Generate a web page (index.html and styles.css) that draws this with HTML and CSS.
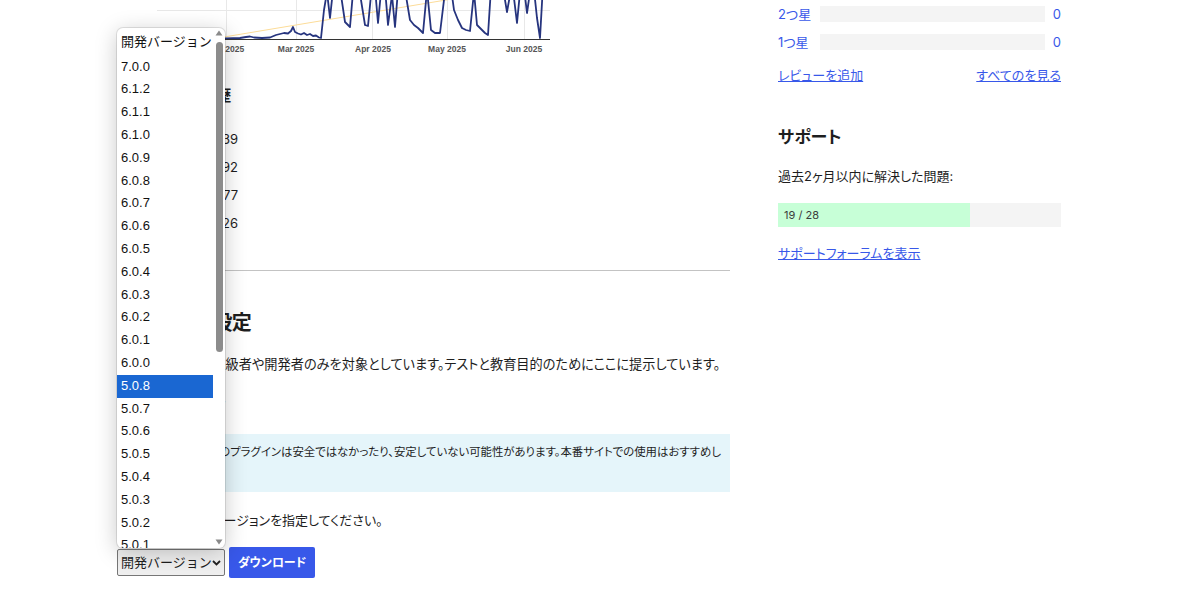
FILE: index.html
```html
<!DOCTYPE html>
<html lang="ja">

<head>
  <meta charset="UTF-8">
  <meta name="viewport" content="width=device-width, initial-scale=1.0">
  <title>プラグイン - 高度な表示</title>
  <link rel="stylesheet" href="styles.css">
</head>

<body>
  <div class="page">
    <main class="main">
      <svg class="chart" width="613" height="56" viewBox="117 0 613 56">
        <line class="grid" x1="157" y1="10.5" x2="550" y2="10.5" />
        <line class="grid" x1="226.5" y1="0" x2="226.5" y2="39" />
        <line class="grid" x1="296.5" y1="0" x2="296.5" y2="39" />
        <line class="grid" x1="372.5" y1="0" x2="372.5" y2="39" />
        <line class="grid" x1="447.5" y1="0" x2="447.5" y2="39" />
        <line class="grid" x1="524.5" y1="0" x2="524.5" y2="39" />
        <line class="trend" x1="200" y1="41" x2="452" y2="-1" />
        <polyline class="series" points="157,38.5 200,38.5 226,38.5 240,38 246,37 250,36.5 254,37.5 262,38 270,37.5 276,35 280,34 284,33 288,33.5 291,31 293,27 295,32 298,33.5 301,34.5 304,33 307,35 310,34 313,36 316,35.5 319,37.5 321,38 324,10 327,-8 330,18 333,-10 337,-12 341,-5 345,22 350,27 353,-8 357,-12 361,0 365,25 368,26 371,-5 375,-12 378,23 381,-8 385,-12 388,25 392,-5 395,27 398,-10 402,-12 406,-4 410,20 414,25 418,28 423,33 427,-10 431,30 435,33 440,33 444,0 447,-10 451,-12 454,10 458,20 462,28 466,30 470,31 474,-8 477,25 481,29 485,33 488,35 491,-12 495,-12 499,-8 503,-12 507,12 510,-5 513,-10 517,23 520,-8 524,-12 527,13 530,-8 534,-10 537,18 540,38 543,-15" />
        <line class="axis" x1="157" y1="39.5" x2="550" y2="39.5" />
        <text x="226" y="52">Feb 2025</text>
        <text x="296" y="52">Mar 2025</text>
        <text x="373" y="52">Apr 2025</text>
        <text x="447" y="52">May 2025</text>
        <text x="524" y="52">Jun 2025</text>
      </svg>

      <section class="history">
        <h3>ダウンロード履歴</h3>
        <table class="history-table">
          <tr><th>今日</th><td>1,239</td></tr>
          <tr><th>昨日</th><td>2,092</td></tr>
          <tr><th>過去7日間</th><td>16,777</td></tr>
          <tr><th>全期間</th><td>848,326</td></tr>
        </table>
      </section>

      <hr class="divider">

      <section class="advanced">
        <h2>高度な表示設定</h2>
        <p class="intro">このセクションは上級者や開発者のみを対象としています。テストと教育目的のためにここに提示しています。</p>
        <h3>以前のバージョン</h3>
        <div class="notice">
          <p>以前のバージョンのプラグインは安全ではなかったり、安定していない可能性があります。本番サイトでの使用はおすすめしません。</p>
        </div>
        <p class="pick">ダウンロードするバージョンを指定してください。</p>
        <div class="download">
          <div class="select">
            <span>開発バージョン</span>
            <svg width="9" height="6" viewBox="0 0 9 6"><path d="M1 1l3.5 3.5L8 1" fill="none" stroke="#222" stroke-width="1.8" /></svg>
          </div>
          <a class="button" href="#">ダウンロード</a>
        </div>
      </section>
    </main>

    <aside class="sidebar">
      <div class="rating-row">
        <a class="rating-label" href="#">2つ星</a>
        <div class="rating-bar"></div>
        <a class="rating-count" href="#">0</a>
      </div>
      <div class="rating-row">
        <a class="rating-label" href="#">1つ星</a>
        <div class="rating-bar"></div>
        <a class="rating-count" href="#">0</a>
      </div>
      <div class="review-links">
        <a href="#">レビューを追加</a>
        <a href="#">すべてのを見る</a>
      </div>

      <h3 class="support-title">サポート</h3>
      <p class="support-text">過去2ヶ月以内に解決した問題:</p>
      <div class="progress">
        <div class="progress-fill" style="width: 67.86%"></div>
        <span class="progress-label">19 / 28</span>
      </div>
      <a class="forum-link" href="#">サポートフォーラムを表示</a>
    </aside>
  </div>

  <!-- open select popup -->
  <div class="dropdown">
    <ul class="options">
      <li>開発バージョン</li>
      <li>7.0.0</li>
      <li>6.1.2</li>
      <li>6.1.1</li>
      <li>6.1.0</li>
      <li>6.0.9</li>
      <li>6.0.8</li>
      <li>6.0.7</li>
      <li>6.0.6</li>
      <li>6.0.5</li>
      <li>6.0.4</li>
      <li>6.0.3</li>
      <li>6.0.2</li>
      <li>6.0.1</li>
      <li>6.0.0</li>
      <li class="selected">5.0.8</li>
      <li>5.0.7</li>
      <li>5.0.6</li>
      <li>5.0.5</li>
      <li>5.0.4</li>
      <li>5.0.3</li>
      <li>5.0.2</li>
      <li>5.0.1</li>
      <li>5.0.0</li>
    </ul>
    <div class="scrollbar">
      <svg class="arrow" width="8" height="6" viewBox="0 0 8 6"><path d="M4 0.5L7.5 5.5H0.5z" fill="#8a8a8a" /></svg>
      <div class="thumb"></div>
      <svg class="arrow arrow-down" width="8" height="6" viewBox="0 0 8 6"><path d="M4 5.5L7.5 0.5H0.5z" fill="#8a8a8a" /></svg>
    </div>
  </div>
</body>

</html>
```

FILE: styles.css
```css
* {
  margin: 0;
  padding: 0;
  box-sizing: border-box;
}

body {
  background: #fff;
  color: #1e1e1e;
  font-family: "Inter", "Noto Sans CJK JP", sans-serif;
  font-size: 13px;
  line-height: 20px;
  font-feature-settings: "palt";
  overflow: hidden;
  height: 604px;
}

a {
  color: #3858e9;
}

.page {
  display: flex;
  gap: 48px;
  padding-left: 117px;
}

.main {
  width: 613px;
}

.chart {
  display: block;
  overflow: hidden;
}

.chart .grid {
  stroke: #e8e8e8;
  stroke-width: 1;
}

.chart .axis {
  stroke: #333;
  stroke-width: 1;
}

.chart .trend {
  stroke: #fcdc98;
  stroke-width: 1;
}

.chart .series {
  fill: none;
  stroke: #26347e;
  stroke-width: 1.8;
  stroke-linejoin: round;
}

.chart text {
  font-family: "Liberation Sans", sans-serif;
  font-size: 8.5px;
  font-weight: bold;
  fill: #555;
  text-anchor: middle;
}

.history h3 {
  margin-top: 28px;
  font-size: 15px;
  line-height: 24px;
  letter-spacing: -0.2px;
}

.history-table {
  margin-top: 17px;
  border-collapse: collapse;
}

.history-table th {
  width: 60px;
  text-align: left;
  font-weight: normal;
}

.history-table td {
  width: 61px;
  text-align: right;
}

.history-table th,
.history-table td {
  height: 28px;
  padding: 0;
  white-space: nowrap;
}

.divider {
  margin-top: 33px;
  border: 0;
  border-top: 1px solid #c3c3c3;
}

.advanced h2 {
  margin-top: 38px;
  font-size: 20px;
  line-height: 28px;
  letter-spacing: -0.8px;
}

.advanced .intro {
  margin-top: 17px;
  font-size: 13.2px;
}

.advanced h3 {
  margin-top: 19px;
  font-size: 14.2px;
  line-height: 20px;
}

.notice {
  margin-top: 21px;
  background: #e5f5fa;
  border-left: 4px solid #72aee6;
  padding: 7px 8px 7px 13px;
  font-size: 11.4px;
  line-height: 22px;
}

.advanced .pick {
  margin-top: 18px;
}

.download {
  display: flex;
  align-items: center;
  gap: 4px;
  margin-top: 17px;
}

.select {
  width: 108px;
  height: 27px;
  display: flex;
  align-items: center;
  justify-content: space-between;
  padding: 0 4px 0 3px;
  background: #efefef;
  border: 1px solid #767676;
  border-radius: 2px;
  font-family: "Liberation Sans", "Noto Sans CJK JP", sans-serif;
  font-size: 13px;
  font-feature-settings: normal;
  white-space: nowrap;
}

.select svg {
  flex: none;
}

.button {
  display: flex;
  align-items: center;
  justify-content: center;
  width: 86px;
  height: 31px;
  background: #3858e9;
  border-radius: 2px;
  color: #fff;
  font-size: 12px;
  font-weight: bold;
  text-decoration: none;
}

/* sidebar */

.sidebar {
  width: 283px;
}

.rating-row {
  display: flex;
  align-items: center;
  height: 28px;
}

.rating-label {
  width: 42px;
  text-decoration: none;
}

.rating-bar {
  flex: 1;
  height: 16px;
  background: #f4f4f4;
}

.rating-count {
  width: 16px;
  text-align: right;
  text-decoration: none;
}

.review-links {
  display: flex;
  justify-content: space-between;
  margin-top: 9px;
}

.support-title {
  margin-top: 40px;
  font-size: 17px;
  line-height: 24px;
}

.support-text {
  margin-top: 17px;
}

.progress {
  position: relative;
  margin-top: 17px;
  height: 24px;
  background: #f4f4f4;
}

.progress-fill {
  height: 100%;
  background: #c7ffd7;
}

.progress-label {
  position: absolute;
  left: 6px;
  top: 2px;
  font-size: 11px;
  color: #3c3c3c;
}

.forum-link {
  display: block;
  margin-top: 16px;
}

/* open select popup */

.dropdown {
  position: absolute;
  left: 117px;
  top: 28px;
  width: 108px;
  height: 520px;
  display: flex;
  background: #fff;
  border-radius: 6px;
  box-shadow: 0 0 0 1px rgba(0, 0, 0, 0.1), 0 4px 22px rgba(0, 0, 0, 0.22);
  overflow: hidden;
  font-family: "Liberation Sans", "Noto Sans CJK JP", sans-serif;
  font-size: 13px;
  font-feature-settings: normal;
}

.options {
  width: 96px;
  list-style: none;
  padding-top: 3.6px;
}

.options li {
  height: 22.8px;
  line-height: 22.8px;
  padding-left: 4px;
  white-space: nowrap;
  color: #111;
}

.options li:first-child {
  height: 24px;
  line-height: 20px;
}

.options li.selected {
  background: #1a67d2;
  color: #fff;
}

.scrollbar {
  width: 12px;
  display: flex;
  flex-direction: column;
  align-items: center;
  padding: 2px 0;
}

.scrollbar .thumb {
  width: 7px;
  height: 310px;
  margin-top: 6px;
  border-radius: 4px;
  background: #8c8c8c;
}

.scrollbar .arrow-down {
  margin-top: auto;
  margin-bottom: 1px;
}
```
